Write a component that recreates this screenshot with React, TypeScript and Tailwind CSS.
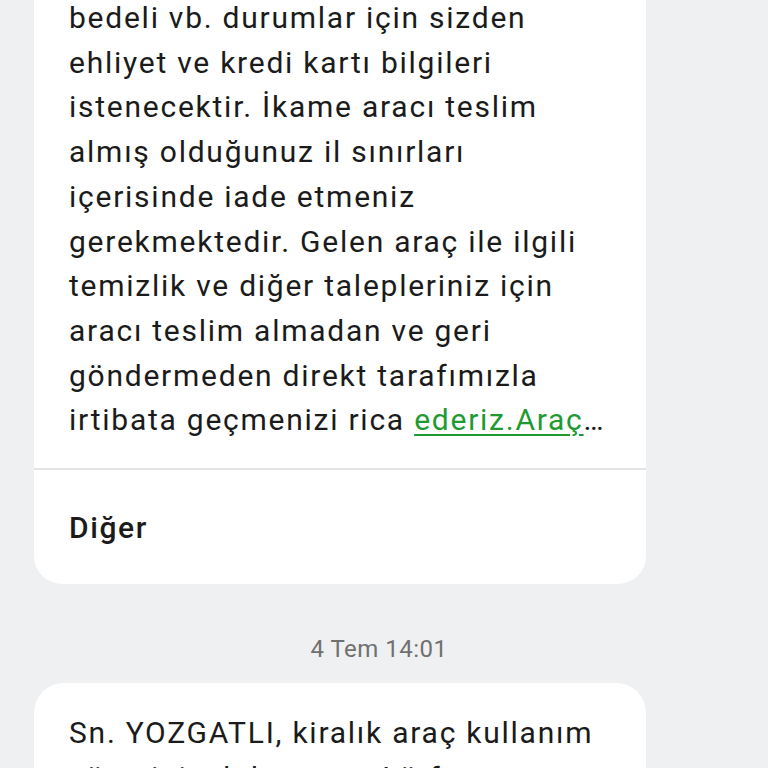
const firstLines = [
  "bedeli vb. durumlar için sizden",
  "ehliyet ve kredi kartı bilgileri",
  "istenecektir. İkame aracı teslim",
  "almış olduğunuz il sınırları",
  "içerisinde iade etmeniz",
  "gerekmektedir. Gelen araç ile ilgili",
  "temizlik ve diğer talepleriniz için",
  "aracı teslim almadan ve geri",
  "göndermeden direkt tarafımızla",
];

export default function App() {
  return (
    <div
      className="w-[768px] h-[768px] overflow-hidden bg-[#eff0f2] text-[#1b1b1b]"
      style={{ fontFamily: "Roboto, 'Noto Sans', sans-serif" }}
    >
      {/* Older message, top cut off */}
      <div className="ml-[34px] w-[612px] -mt-[4px] bg-white rounded-b-[28px]">
        <div className="pl-[35px] pr-[10px] pb-[25px] text-[30px] leading-[44.7px] tracking-[1.75px]">
          {firstLines.map((line, i) => (
            <div key={i} className="whitespace-nowrap">
              {line}
            </div>
          ))}
          <div className="whitespace-nowrap">
            irtibata geçmenizi rica{" "}
            <span className="text-[#1f9a31] underline underline-offset-[4px] decoration-[1.5px]">
              ederiz.Araç
            </span>
            …
          </div>
        </div>
        <div className="h-[2px] bg-[#e4e4e6]" />
        <div className="h-[114px] pl-[35px] flex items-center">
          <span className="text-[30px] font-medium tracking-[1.6px]">Diğer</span>
        </div>
      </div>

      {/* Timestamp */}
      <div className="mt-[47px] text-center text-[24px] tracking-[0.5px] text-[#707070]">
        <span className="relative -left-[5px]">4 Tem 14:01</span>
      </div>

      {/* New message */}
      <div className="mt-[16px] ml-[34px] w-[612px] bg-white rounded-t-[30px] pt-[28px] pl-[35px] text-[30px] leading-[44.7px] tracking-[1.75px]">
        <div className="whitespace-nowrap">Sn. YOZGATLI, kiralık araç kullanım</div>
        <div className="whitespace-nowrap">süresiniz dolmuştur. Lütfen aracınızı</div>
      </div>
    </div>
  );
}
